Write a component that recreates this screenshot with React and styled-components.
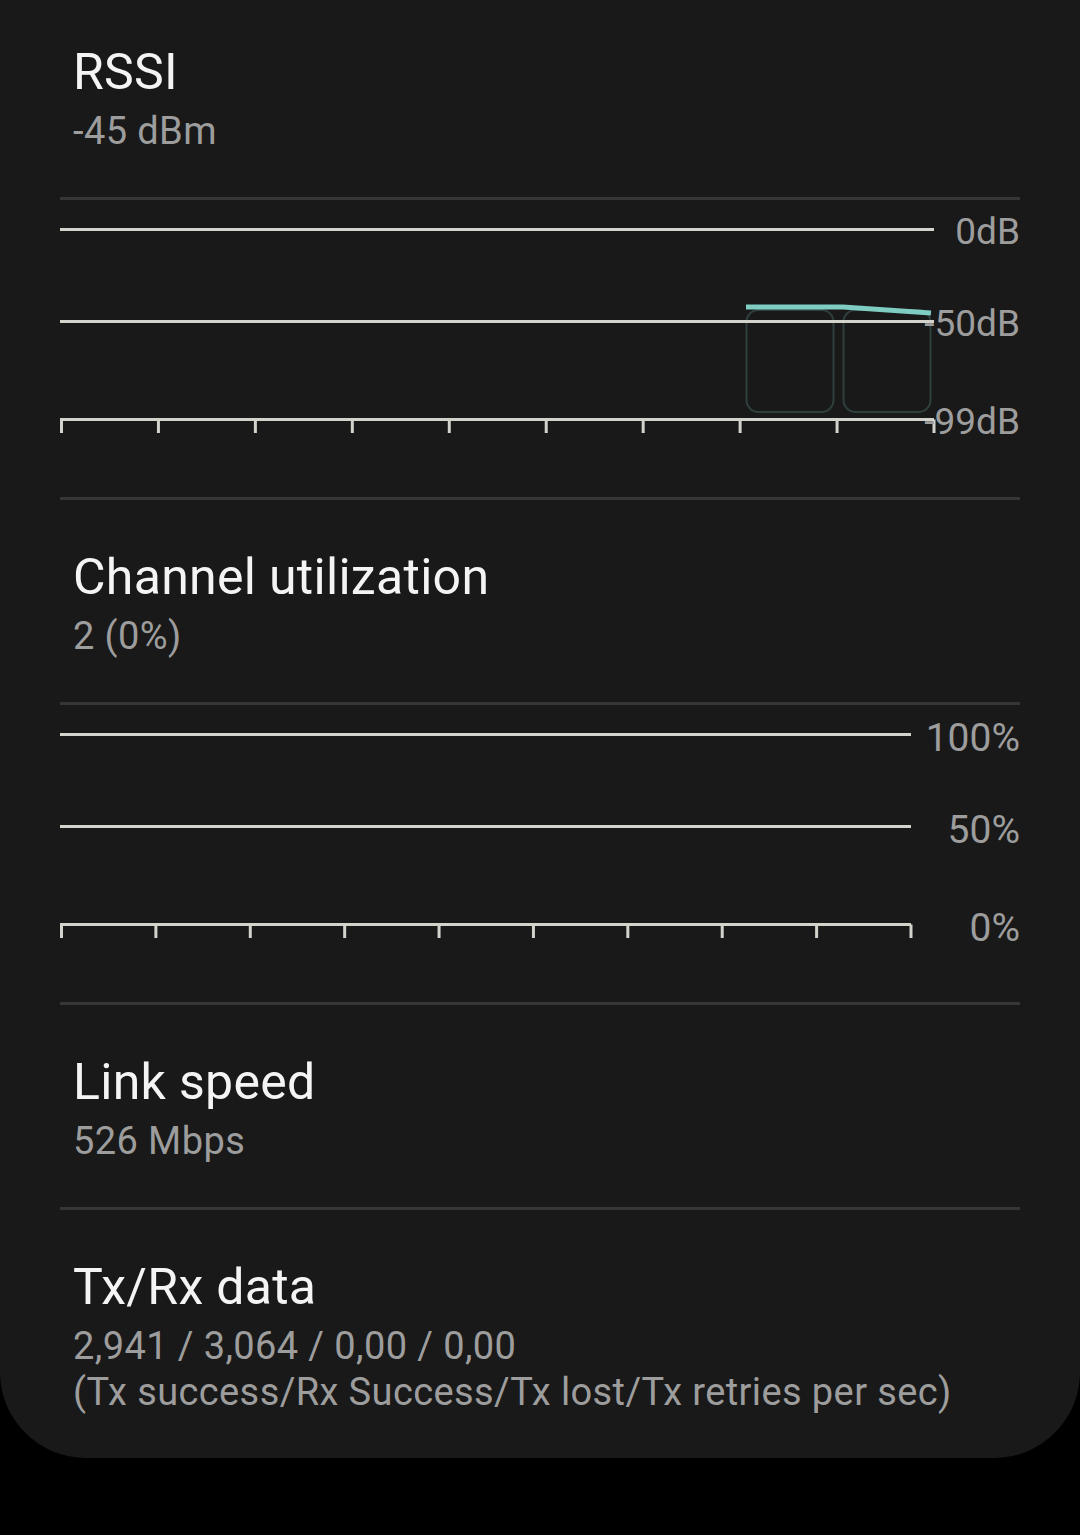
import React from 'react'
import styled, { createGlobalStyle } from 'styled-components'

const GlobalStyle = createGlobalStyle`
    html, body {
        margin: 0;
        padding: 0;
        background: #000;
    }
    body {
        font-family: Roboto, "Noto Sans", "Liberation Sans", sans-serif;
        -webkit-font-smoothing: antialiased;
    }
`

const rssiSamples = [
    { x: 686, y: 107 },
    { x: 783, y: 107 },
    { x: 871, y: 113 },
]

function Chart({ width, labels, labelSize, children }) {
    const rows = [29.5, 121.5, 219.5]
    const step = (width - 1.5) / 9
    const ticks = Array.from({ length: 10 }, (_, i) => 1.5 + i * step)
    return (
        <ChartBox>
            <svg width="960" height="297" viewBox="0 0 960 297">
                {children}
                {rows.map((y) => (
                    <line key={y} x1="0" x2={width} y1={y} y2={y} stroke="#d3d3cc" strokeWidth="3" />
                ))}
                {ticks.map((x) => (
                    <line key={x} x1={x} x2={x} y1={219.5} y2={233} stroke="#d3d3cc" strokeWidth="3" />
                ))}
                {labels.map((label, i) => (
                    <ChartLabel key={label} x="960" y={rows[i] + (labelSize > 37 ? 16 : 14)} textAnchor="end" $size={labelSize}>
                        {label}
                    </ChartLabel>
                ))}
            </svg>
        </ChartBox>
    )
}

function Item({ title, children, first }) {
    return (
        <ItemBox $first={first}>
            <Title>{title}</Title>
            <Sub>{children}</Sub>
        </ItemBox>
    )
}

function App() {
    const path = rssiSamples.map((p) => `${p.x},${p.y}`).join(' ')
    return (
        <Page>
            <GlobalStyle />
            <Card>
                <Item title="RSSI" first>-45 dBm</Item>
                <Divider />
                <Chart width={874} labels={['0dB', '-50dB', '-99dB']} labelSize={37}>
                    <Bar x="686.5" y="110" width="87" height="102" rx="12" />
                    <Bar x="783.5" y="110" width="87" height="102" rx="12" />
                    <polyline points={path} fill="none" stroke="#7fcdc2" strokeWidth="5" />
                </Chart>
                <Divider />
                <Item title="Channel utilization">2 (0%)</Item>
                <Divider />
                <Chart width={851} labels={['100%', '50%', '0%']} labelSize={39} />
                <Divider />
                <Item title="Link speed">526 Mbps</Item>
                <Divider />
                <Item title="Tx/Rx data">
                    2,941 / 3,064 / 0,00 / 0,00
                    <br />
                    (Tx success/Rx Success/Tx lost/Tx retries per sec)
                </Item>
            </Card>
        </Page>
    )
}

export default App

const Page = styled.div`
    width: 1080px;
    min-height: 1535px;
    background: #000;
`
const Card = styled.div`
    background: #191919;
    padding: 0 60px;
    border-radius: 0 0 86px 86px;
    display: flex;
    flex-direction: column;
`
const ItemBox = styled.div`
    padding: ${(p) => (p.$first ? '44px' : '49px')} 13px 43px;
`
const Title = styled.div`
    font-size: 50px;
    line-height: 56px;
    letter-spacing: 0.3px;
    color: #f4f4f4;
    margin-bottom: 8px;
`
const Sub = styled.div`
    font-size: 38px;
    line-height: 46px;
    letter-spacing: 0.4px;
    color: #9d9d9d;
`
const Divider = styled.div`
    height: 3px;
    background: #363636;
`
const ChartBox = styled.div`
    height: 297px;
    svg {
        display: block;
    }
`
const ChartLabel = styled.text`
    font-family: Roboto, "Noto Sans", sans-serif;
    font-size: ${(p) => p.$size}px;
    fill: #9d9d9d;
`
const Bar = styled.rect`
    fill: none;
    stroke: #2f3f3e;
    stroke-width: 2;
`
